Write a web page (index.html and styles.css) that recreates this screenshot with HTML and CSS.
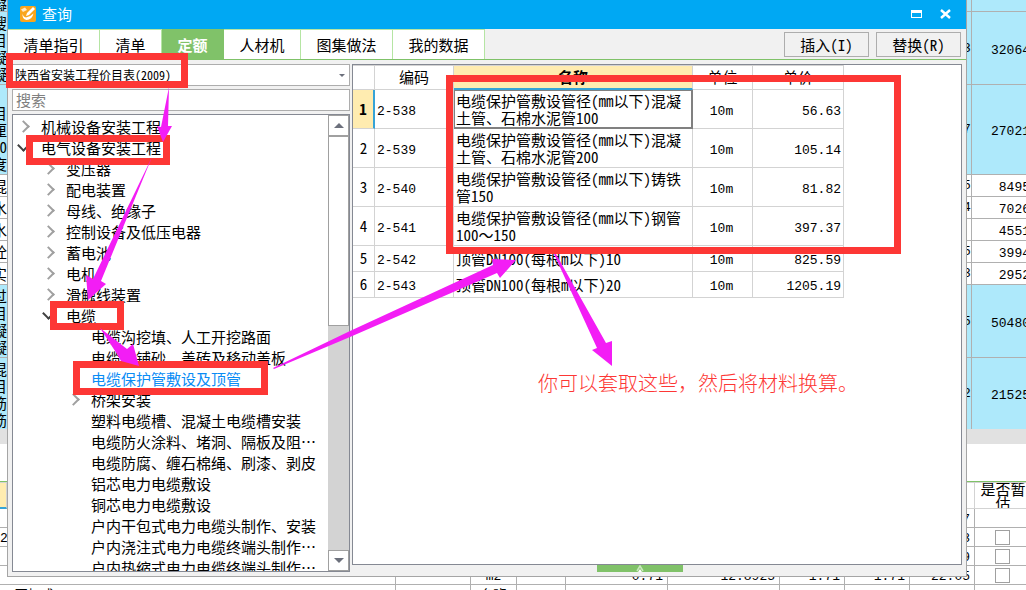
FILE: index.html
```html
<!DOCTYPE html>
<html lang="zh-CN">
<head>
<meta charset="utf-8">
<title>查询</title>
<link rel="stylesheet" href="styles.css">
</head>
<body>
<div class="screen">
  <main class="workspace" aria-label="工程量清单">
    <table class="bills">
      <colgroup><col><col class="w-amount"></colgroup>
      <tr class="blue h-cut"><td><div class="bill"><span class="clip">凝</span><span></span></div></td><td></td></tr>
      <tr class="blue h-73"><td><div class="bill"><span class="clip">搜<br>目<br>凝<br>凝</span><span class="tail">3</span></div></td><td>32064</td></tr>
      <tr class="blue h-90"><td><div class="bill"><span class="clip">&nbsp;<br>目<br>厘<br>0<br>度</span><span class="tail">7</span></div></td><td>27021</td></tr>
      <tr class="h-22"><td><div class="bill"><span class="clip">混</span><span class="tail">5</span></div></td><td>8495</td></tr>
      <tr class="h-22"><td><div class="bill"><span class="clip">水</span><span class="tail">4</span></div></td><td>7026</td></tr>
      <tr class="h-22"><td><div class="bill"><span class="clip">水</span><span class="tail"></span></div></td><td>4551</td></tr>
      <tr class="h-22"><td><div class="bill"><span class="clip">砼</span><span class="tail">5</span></div></td><td>3994</td></tr>
      <tr class="h-22"><td><div class="bill"><span class="clip">实</span><span class="tail">3</span></div></td><td>2952</td></tr>
      <tr class="blue h-73"><td><div class="bill"><span class="clip">过<br>目<br>凝<br>凝</span><span class="tail">5</span></div></td><td>50480</td></tr>
      <tr class="blue h-71"><td><div class="bill"><span class="clip">混<br>目<br>筋<br>筋</span><span class="tail">2</span></div></td><td>21525</td></tr>
    </table>
    <div class="splitter"></div>
    <div class="subtabs"><span class="clip">冫</span></div>
    <table class="materials">
      <colgroup><col class="w-7"><col><col class="w-75"><col class="w-46"><col class="w-50"><col class="w-102"><col class="w-112"><col class="w-65"><col class="w-65"><col class="w-65"><col class="w-58"></colgroup>
      <tr class="head"><th class="current"></th><th></th><th></th><th></th><th></th><th></th><th></th><th></th><th></th><th></th><th><div class="estimate">是否暂估</div></th></tr>
      <tr><td></td><td></td><td></td><td></td><td></td><td></td><td></td><td></td><td></td><td>7</td><td></td></tr>
      <tr><td>2</td><td></td><td></td><td></td><td></td><td></td><td></td><td></td><td></td><td>3</td><td class="mid"><input type="checkbox" aria-label="是否暂估"></td></tr>
      <tr><td></td><td></td><td></td><td></td><td></td><td></td><td></td><td></td><td></td><td>9</td><td class="mid"><input type="checkbox" aria-label="是否暂估"></td></tr>
      <tr><td></td><td></td><td></td><td class="mid">m2</td><td></td><td>0.71</td><td>12.8925</td><td>1.71</td><td>1.71</td><td>22.05</td><td class="mid"><input type="checkbox" aria-label="是否暂估"></td></tr>
      <tr><td></td><td class="name">(更加式)</td><td></td><td class="mid">台班</td><td></td><td></td><td></td><td></td><td></td><td></td><td></td></tr>
    </table>
  </main>

  <section class="dialog" role="dialog" aria-label="查询">
    <header class="titlebar">
      <svg class="logo" viewBox="0 0 16 16" aria-hidden="true"><rect width="16" height="16" rx="2" fill="#f9a51c"/><path d="M1 3.500L5 1.500 7 4 3 6z" fill="#ffe9c4"/><path d="M6 10l1-3 6-6 2 2-6 6z" fill="#fff"/><path d="M2.500 7.500Q3 11 6 11.500 10 11 13.500 7.500 12 14 6.500 14 2 13 2.500 7.500z" fill="#fff"/></svg>
      <h1>查询</h1>
      <button class="winbtn" aria-label="最大化"><svg viewBox="0 0 12 10"><path d="M0 1h11v8H0zM1 4v4h9V4z" fill="#fff" fill-rule="evenodd"/></svg></button>
      <button class="winbtn" aria-label="关闭"><svg viewBox="0 0 12 10"><path d="M1 1l9 8M10 1L1 9" stroke="#fff" stroke-width="2.4"/></svg></button>
    </header>
    <div class="toolbar">
      <nav class="tabs">
        <button class="t-4">清单指引</button><button class="t-2">清单</button><button class="t-2 active">定额</button><button class="t-3">人材机</button><button class="t-4">图集做法</button><button class="t-4">我的数据</button>
      </nav>
      <div class="actions"><button>插入(I)</button><button>替换(R)</button></div>
    </div>
    <div class="content">
      <aside class="side">
        <div class="combo">
          <select aria-label="定额库"><option>陕西省安装工程价目表(2009)</option></select>
          <svg viewBox="0 0 6 4" aria-hidden="true"><path d="M0 0h6L3 3z" fill="#6c707c"/></svg>
        </div>
        <input class="search" type="text" placeholder="搜索" aria-label="搜索">
        <div class="tree">
          <ul class="nodes">
            <li class="l1 closed">机械设备安装工程</li>
            <li class="l1 open">电气设备安装工程</li>
            <li class="l2 closed">变压器</li>
            <li class="l2 closed">配电装置</li>
            <li class="l2 closed">母线、绝缘子</li>
            <li class="l2 closed">控制设备及低压电器</li>
            <li class="l2 closed">蓄电池</li>
            <li class="l2 closed">电机</li>
            <li class="l2 closed">滑触线装置</li>
            <li class="l2 open">电缆</li>
            <li class="l3">电缆沟挖填、人工开挖路面</li>
            <li class="l3">电缆沟铺砂、盖砖及移动盖板</li>
            <li class="l3 selected">电缆保护管敷设及顶管</li>
            <li class="l3 closed">桥架安装</li>
            <li class="l3">塑料电缆槽、混凝土电缆槽安装</li>
            <li class="l3">电缆防火涂料、堵洞、隔板及阻⋯</li>
            <li class="l3">电缆防腐、缠石棉绳、刷漆、剥皮</li>
            <li class="l3">铝芯电力电缆敷设</li>
            <li class="l3">铜芯电力电缆敷设</li>
            <li class="l3">户内干包式电力电缆头制作、安装</li>
            <li class="l3">户内浇注式电力电缆终端头制作⋯</li>
            <li class="l3">户内热缩式电力电缆终端头制作⋯</li>
          </ul>
          <div class="scrollbar">
            <button aria-label="向上滚动"><svg viewBox="0 0 10 5"><path d="M0 5h10L5 0z" fill="#6c707c"/></svg></button>
            <div class="thumb"></div>
            <div class="track"></div>
            <button aria-label="向下滚动"><svg viewBox="0 0 10 5"><path d="M0 0h10L5 5z" fill="#6c707c"/></svg></button>
          </div>
        </div>
      </aside>
      <div class="result">
        <div class="pane">
          <table class="quota">
            <colgroup><col class="q-no"><col class="q-code"><col class="q-name"><col class="q-unit"><col class="q-price"></colgroup>
            <thead><tr><th></th><th>编码</th><th class="current">名称</th><th>单位</th><th>单价</th></tr></thead>
            <tbody>
              <tr class="tall current"><th>1</th><td class="num">2-538</td><td class="cell">电缆保护管敷设管径(mm以下)混凝土管、石棉水泥管100</td><td class="unit">10m</td><td class="price">56.63</td></tr>
              <tr class="tall"><th>2</th><td class="num">2-539</td><td>电缆保护管敷设管径(mm以下)混凝土管、石棉水泥管200</td><td class="unit">10m</td><td class="price">105.14</td></tr>
              <tr class="tall"><th>3</th><td class="num">2-540</td><td>电缆保护管敷设管径(mm以下)铸铁管150</td><td class="unit">10m</td><td class="price">81.82</td></tr>
              <tr class="tall"><th>4</th><td class="num">2-541</td><td>电缆保护管敷设管径(mm以下)钢管100<span class="wide">～</span>150</td><td class="unit">10m</td><td class="price">397.37</td></tr>
              <tr><th>5</th><td class="num">2-542</td><td>顶管DN100(每根m以下)10</td><td class="unit">10m</td><td class="price">825.59</td></tr>
              <tr><th>6</th><td class="num">2-543</td><td>顶管DN100(每根m以下)20</td><td class="unit">10m</td><td class="price">1205.19</td></tr>
            </tbody>
          </table>
        </div>
        <button class="handle" aria-label="展开"><svg viewBox="0 0 8 7"><path d="M1 6l3-5 3 5" fill="none" stroke="#c9e8bd" stroke-width="1.6"/><path d="M2 7l2-3 2 3z" fill="#fff"/></svg></button>
      </div>
    </div>
  </section>

  <svg class="marks" width="1026" height="590" aria-hidden="true">
    <g fill="none" stroke="#fd3735" stroke-width="7">
      <rect x="9.5" y="56.5" width="175" height="28"/>
      <rect x="29.5" y="138.5" width="137" height="23"/>
      <rect x="53.5" y="304.5" width="67" height="22"/>
      <rect x="76.5" y="364.500" width="188" height="27"/>
      <rect x="449.5" y="78.5" width="448" height="172"/>
    </g>
    <g fill="#f31df5">
      <path d="M169 87L161 127 157 126 163 142 172 126 168 126z"/>
      <path d="M152 157L93 279 86 275 88 300 106 284 101 281z"/>
      <path d="M100 328L117 354 121 361 139 366 133 344 127 349z"/>
      <path d="M273 368L350 331 493 265 492 259 516 260 500 278 497 273 350 337 274 369z"/>
      <path d="M554 254L597 348 592 350 612 366 612 341 606 343 556 254z"/>
    </g>
  </svg>
  <p class="remark">你可以套取这些，然后将材料换算。</p>
</div>
</body>
</html>
```

FILE: styles.css
```css
* { box-sizing: border-box; }
body, h1, ul, p { margin: 0; padding: 0; }
body {
  font: 15px/17px "Noto Sans CJK SC", sans-serif;
  font-feature-settings: "hwid";
  color: #000;
  background: #fff;
}
button, input, select { font: inherit; font-feature-settings: inherit; color: inherit; border-radius: 0; margin: 0; padding: 0; }
button { border: 0; background: none; }
button svg { display: block; }
table { border-collapse: separate; border-spacing: 0; table-layout: fixed; }
th, td { padding: 0; font-weight: 400; }
.screen { position: relative; height: 100vh; overflow: hidden; }

/* sheet behind the dialog */
.workspace { height: 100%; overflow: hidden; }
.bills, .materials { width: calc(100% + 6px); }
.w-amount { width: 60px; }
.bills td { border-bottom: 1px solid #b0b0b0; border-right: 1px solid #b0b0b0; }
.bills td:last-child { padding: 4px 2px 0 0; border-right: 0; text-align: right; font: 13px/17px "Liberation Mono", monospace; }
.blue { background: #aee9fb; }
.bills tr:last-child td { border-bottom: 0; }
.bill { display: flex; align-items: center; justify-content: space-between; }
.clip { width: 7px; display: flex; justify-content: flex-end; overflow: hidden; text-align: right; white-space: nowrap; }
.tail { width: 8px; font: 13px/17px "Liberation Mono", monospace; }
.h-cut { height: 12px; line-height: 11px; }
.h-73 { height: 73px; }
.h-90 { height: 90px; }
.h-22 { height: 22px; }
.h-71 { height: 71px; }
.splitter { height: 15px; background: #e1e1e1; }
.subtabs { height: 38px; padding-top: 16px; border-bottom: 1px solid #7fc268; }
.materials .head { height: 27px; }
.materials th { border: 1px solid #d3d3d3; border-left: 0; }
.materials th.current { background: #ffecb0; border-bottom: 2px solid #36a3d6; }
.materials .estimate { height: 25px; display: flex; align-items: center; padding: 0 5px; line-height: 14px; text-align: center; overflow: hidden; }
.materials td { height: 19px; padding: 4px 4px 0 0; border-right: 1px solid #b0b0b0; border-bottom: 1px solid #b0b0b0; text-align: right; font: 13px/14px "Liberation Mono", "Noto Sans CJK SC", monospace; }
.materials td:first-child { padding: 4px 0 0; border-right: 0; }
.materials .mid { padding: 4px 0 0; text-align: center; }
.materials .mid:last-child { padding: 1px 2px 0 0; }
.materials .name { text-align: left; }
.materials input { display: block; appearance: none; width: 15px; height: 15px; margin: 0 auto; border: 1px solid #a0a0a0; background: #fff; }
.w-7 { width: 7px; }
.w-46 { width: 46px; }
.w-50 { width: 49px; }
.w-58 { width: 57px; }
.w-65 { width: 65px; }
.w-75 { width: 75px; }
.w-102 { width: 102px; }
.w-112 { width: 112px; }

/* dialog */
.dialog { position: absolute; inset: 0 59px 13px 7px; display: flex; flex-direction: column; background: #f1f1f1; border: 1px solid #a5a5a5; border-top: 0; }
.titlebar { height: 29px; flex: none; display: flex; align-items: center; gap: 6px; padding: 0 9px 2px 12px; background: #00a8f3; color: #fff; }
.titlebar h1 { flex: 1; font-size: 15px; font-weight: 400; }
.logo { width: 16px; height: 16px; }
.winbtn { width: 23px; }
.winbtn svg { width: 12px; height: 10px; margin: 0 auto; }
.toolbar { height: 31px; flex: none; display: flex; justify-content: space-between; border-bottom: 1px solid #7fc268; }
.tabs { display: flex; }
.tabs button { border: 1px solid #b5e5a3; border-left: 0; border-bottom: 0; background: #fff; }
.tabs .active { background: #80c269; color: #fff; font-weight: 700; border-color: #80c269; }
.t-4 { width: 92px; }
.t-2 { width: 62px; }
.t-3 { width: 77px; }
.actions { display: flex; gap: 7px; padding: 3px 5px 2px; }
.actions button { width: 85px; border: 1px solid #adadad; }
.content { flex: 1; min-height: 0; display: flex; gap: 2px; padding: 4px 4px 4px; }
.side { width: 338px; flex: none; display: flex; flex-direction: column; gap: 3px; }
.combo { position: relative; height: 22px; flex: none; }
.combo select { appearance: none; width: 100%; height: 22px; padding: 0 0 2px 2px; border: 1px solid #adadad; background: #fff; font-size: 12px; }
.combo svg { position: absolute; right: 5px; top: 10px; width: 6px; height: 4px; }
.search { height: 22px; flex: none; padding: 0 3px 2px; border: 1px solid #adadad; background: #fff; }
.search::placeholder { color: #808080; opacity: 1; }
.tree { flex: 1; min-height: 0; display: flex; border: 1px solid #858993; background: #fff; }
.nodes { flex: 1; list-style: none; padding-top: 1px; overflow: hidden; }
.nodes li { position: relative; line-height: 21px; white-space: nowrap; }
.l1 { padding-left: 28px; }
.l2 { padding-left: 53px; }
.l3 { padding-left: 78px; }
.selected { color: #0a8cf5; }
.closed::before, .open::before { content: ""; position: absolute; top: 6px; width: 7px; height: 7px; border: solid #a0a0a0; border-width: 2px 2px 0 0; transform: rotate(45deg); }
.open::before { top: 4px; border-color: #404040; transform: rotate(135deg); }
.l1::before { left: 6px; }
.l2::before { left: 31px; }
.l3::before { left: 56px; }
.scrollbar { width: 21px; flex: none; display: flex; flex-direction: column; background: #d3d3d3; }
.scrollbar button { height: 21px; flex: none; border: 1px solid #a0a0a0; background: #fff; }
.scrollbar svg { width: 10px; height: 5px; margin: 0 auto; }
.thumb { flex: 189; border: 1px solid #a0a0a0; background: #fff; }
.track { flex: 225; }
.result { flex: 1; min-width: 0; display: flex; flex-direction: column; align-items: center; }
.pane { flex: 1; width: 100%; border: 1px solid #858993; background: #fff; }
.handle { width: 86px; height: 7px; margin-left: -34px; background: #80c269; }
.handle svg { width: 8px; height: 7px; margin: 0 auto; }

/* quota list */
.quota { width: 491px; }
.q-no { width: 22px; }
.q-code { width: 79px; }
.q-name { width: 239px; }
.q-unit { width: 60px; }
.q-price { width: 91px; }
.quota th, .quota td { height: 26px; border-right: 1px solid #d3d3d3; border-bottom: 1px solid #d3d3d3; }
.quota th { padding-bottom: 2px; }
.quota thead th { height: 25px; border-top: 1px solid #d3d3d3; }
.quota .tall td { height: 39px; }
.quota td { padding-left: 2px; }
.quota thead .current { background: #ffecb0; border-bottom: 2px solid #36a3d6; font-weight: 700; }
.quota tr.current th { background: #ffecb0; border-right: 2px solid #36a3d6; font-weight: 700; }
.quota .cell { padding-left: 1px; border: 2px solid #808080; border-width: 1px 2px 2px 1px; }
.quota .num, .quota .unit, .quota .price { padding-top: 4px; font: 13px/17px "Liberation Mono", monospace; }
.quota .unit { padding: 4px 2px 0 0; text-align: center; }
.quota .price { padding-right: 2px; text-align: right; }
.wide { font-feature-settings: normal; }

/* annotations */
.marks { position: absolute; left: 0; top: 0; pointer-events: none; }
.remark { position: absolute; left: 538px; top: 370px; font-size: 20px; font-weight: 300; line-height: 26px; color: #fd3735; white-space: nowrap; font-feature-settings: normal; }
```
